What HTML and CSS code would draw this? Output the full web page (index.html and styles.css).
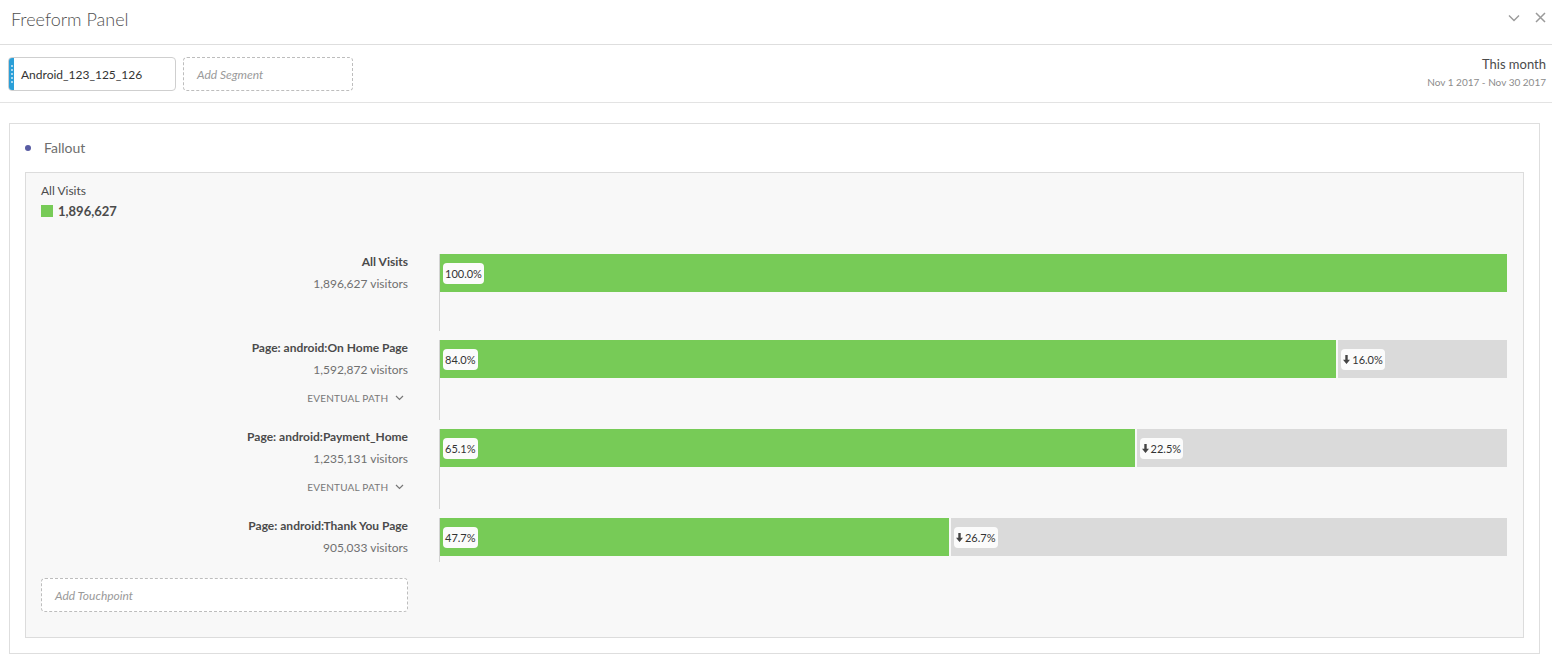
FILE: index.html
```html
<!DOCTYPE html>
<html>
<head>
<meta charset="utf-8">
<link rel="stylesheet" href="styles.css">
</head>
<body>
<header class="panel-header">
  <h1 class="panel-title">Freeform Panel</h1>
  <div class="panel-actions">
    <svg class="icon-chevron" width="12" height="8" viewBox="0 0 12 8"><path d="M1 1.5l5 5 5-5" fill="none" stroke="#9a9a9a" stroke-width="1.4"/></svg>
    <svg class="icon-close" width="11" height="11" viewBox="0 0 11 11"><path d="M1 1l9 9M10 1l-9 9" fill="none" stroke="#9a9a9a" stroke-width="1.5"/></svg>
  </div>
</header>

<section class="segment-bar">
  <div class="segments">
    <div class="segment-pill">
      <span class="segment-handle"><i></i><i></i><i></i><i></i><i></i></span>
      <span class="segment-name">Android_123_125_126</span>
    </div>
    <div class="segment-add">Add Segment</div>
  </div>
  <div class="date-range">
    <div class="date-label">This month</div>
    <div class="date-value">Nov 1 2017 - Nov 30 2017</div>
  </div>
</section>

<section class="viz-card">
  <div class="viz-title"><span class="viz-dot"></span>Fallout</div>
  <div class="fallout">
    <div class="legend">
      <div class="legend-label">All Visits</div>
      <div class="legend-value"><span class="legend-swatch"></span>1,896,627</div>
    </div>

    <div class="rows">
      <div class="row row-first">
        <div class="label">
          <div class="label-title">All Visits</div>
          <div class="label-sub">1,896,627 visitors</div>
        </div>
        <div class="track">
          <div class="bar">
            <div class="bar-fill" style="width:100%"><span class="tag">100.0%</span></div>
          </div>
        </div>
      </div>

      <div class="row">
        <div class="label">
          <div class="label-title">Page: android:On Home Page</div>
          <div class="label-sub">1,592,872 visitors</div>
          <div class="path">EVENTUAL PATH <svg width="9" height="6" viewBox="0 0 9 6"><path d="M1 1l3.5 3.5L8 1" fill="none" stroke="#777" stroke-width="1.2"/></svg></div>
        </div>
        <div class="track">
          <div class="bar">
            <div class="bar-fill" style="width:84%"><span class="tag">84.0%</span></div>
            <div class="bar-drop"><span class="tag"><svg class="arrow" width="7" height="9" viewBox="0 0 7 9"><path d="M2.3 0h2.4v4.8H7L3.5 9 0 4.8h2.3z" fill="#444"/></svg>16.0%</span></div>
          </div>
        </div>
      </div>

      <div class="row">
        <div class="label">
          <div class="label-title">Page: android:Payment_Home</div>
          <div class="label-sub">1,235,131 visitors</div>
          <div class="path">EVENTUAL PATH <svg width="9" height="6" viewBox="0 0 9 6"><path d="M1 1l3.5 3.5L8 1" fill="none" stroke="#777" stroke-width="1.2"/></svg></div>
        </div>
        <div class="track">
          <div class="bar">
            <div class="bar-fill" style="width:65.1%"><span class="tag">65.1%</span></div>
            <div class="bar-drop"><span class="tag"><svg class="arrow" width="7" height="9" viewBox="0 0 7 9"><path d="M2.3 0h2.4v4.8H7L3.5 9 0 4.8h2.3z" fill="#444"/></svg>22.5%</span></div>
          </div>
        </div>
      </div>

      <div class="row row-last">
        <div class="label">
          <div class="label-title">Page: android:Thank You Page</div>
          <div class="label-sub">905,033 visitors</div>
        </div>
        <div class="track">
          <div class="bar">
            <div class="bar-fill" style="width:47.7%"><span class="tag">47.7%</span></div>
            <div class="bar-drop"><span class="tag"><svg class="arrow" width="7" height="9" viewBox="0 0 7 9"><path d="M2.3 0h2.4v4.8H7L3.5 9 0 4.8h2.3z" fill="#444"/></svg>26.7%</span></div>
          </div>
        </div>
      </div>
    </div>

    <div class="touchpoint-add">Add Touchpoint</div>
  </div>
</section>
</body>
</html>
```

FILE: styles.css
```css
* { box-sizing: border-box; }

body {
  margin: 0;
  background: #ffffff;
  font-family: Lato, "Open Sans", "Liberation Sans", sans-serif;
  color: #4b4b4b;
}

.panel-header {
  height: 45px;
  border-bottom: 1px solid #dedede;
  display: flex;
  justify-content: space-between;
  align-items: flex-start;
  padding: 7px 6px 0 11px;
}

.panel-title {
  margin: 0;
  font-size: 18px;
  line-height: 24px;
  font-weight: 300;
  color: #505050;
}

.panel-actions {
  display: flex;
  align-items: center;
  gap: 15px;
  padding-top: 5px;
}

.segment-bar {
  height: 58px;
  border-bottom: 1px solid #e3e3e3;
  display: flex;
  justify-content: space-between;
  padding: 11px 6px 0 8px;
}

.segments {
  display: flex;
  gap: 7px;
  align-items: flex-start;
  padding-top: 1px;
}

.segment-pill {
  width: 168px;
  height: 34px;
  border: 1px solid #cfcfcf;
  border-radius: 4px;
  display: flex;
  align-items: center;
  overflow: hidden;
  background: #fff;
}

.segment-handle {
  width: 5px;
  height: 100%;
  background: #2a9fd8;
  display: flex;
  flex-direction: column;
  align-items: center;
  justify-content: center;
  gap: 2px;
}

.segment-handle i {
  display: block;
  width: 2px;
  height: 2px;
  background: #cfe9f7;
  border-radius: 1px;
}

.segment-name {
  padding-left: 7px;
  font-size: 12px;
  color: #333;
}

.segment-add {
  width: 170px;
  height: 34px;
  border: 1px dashed #bdbdbd;
  border-radius: 4px;
  display: flex;
  align-items: center;
  padding-left: 13px;
  font-size: 12px;
  font-style: italic;
  color: #9a9a9a;
}

.date-range {
  text-align: right;
}

.date-label {
  font-size: 13px;
  line-height: 16px;
  color: #4b4b4b;
}

.date-value {
  margin-top: 3px;
  font-size: 10px;
  line-height: 14px;
  color: #8c8c8c;
}

.viz-card {
  margin: 20px 12px 0 9px;
  height: 531px;
  border: 1px solid #dedede;
  padding: 0 15px 15px 15px;
}

.viz-title {
  display: flex;
  align-items: center;
  padding: 15px 0 15px 0;
  font-size: 14px;
  line-height: 18px;
  color: #6e6e6e;
}

.viz-dot {
  width: 6px;
  height: 6px;
  border-radius: 50%;
  background: #585ca3;
  margin: 0 13px 0 0;
}

.fallout {
  background: #f8f8f8;
  border: 1px solid #dcdcdc;
  height: 466px;
  padding: 10px 16px 0 15px;
}

.legend-label {
  font-size: 12px;
  line-height: 16px;
  color: #4b4b4b;
}

.legend-value {
  display: flex;
  align-items: center;
  margin-top: 3px;
  font-size: 13px;
  font-weight: 700;
  line-height: 18px;
  color: #4b4b4b;
}

.legend-swatch {
  width: 12px;
  height: 12px;
  background: #77cb57;
  margin-right: 5px;
}

.rows {
  margin-top: 34px;
  display: flex;
  flex-direction: column;
  gap: 9px;
}

.row {
  display: grid;
  grid-template-columns: 367px 1fr;
  column-gap: 31px;
}

.label {
  text-align: right;
}

.label-title {
  font-size: 12px;
  line-height: 16px;
  font-weight: 700;
  color: #4b4b4b;
}

.label-sub {
  margin-top: 6px;
  font-size: 12px;
  line-height: 16px;
  color: #707070;
}

.path {
  margin-top: 12px;
  padding-right: 4px;
  font-size: 10px;
  line-height: 16px;
  color: #777;
  letter-spacing: 0.2px;
}

.path svg {
  margin-left: 4px;
  vertical-align: 1px;
}

.track {
  height: 80px;
  border-left: 1px solid #d3d3d3;
}

.row-first .track {
  height: 77px;
}

.row-last .track {
  height: 44px;
}

.bar {
  display: flex;
  height: 38px;
}

.bar-fill {
  background: #77cb57;
  height: 100%;
  padding: 8px 0 0 3px;
}

.bar-drop {
  flex: 1;
  background: #dadada;
  margin-left: 2px;
  height: 100%;
  padding: 8px 0 0 3px;
}

.tag {
  display: inline-flex;
  align-items: center;
  height: 21px;
  padding: 0 2px;
  background: #fbfbfb;
  border-radius: 4px;
  font-size: 11px;
  color: #333;
}

.arrow {
  margin-right: 2px;
}

.touchpoint-add {
  margin-top: 16px;
  width: 367px;
  height: 34px;
  border: 1px dashed #bdbdbd;
  border-radius: 4px;
  background: #fff;
  display: flex;
  align-items: center;
  padding-left: 13px;
  font-size: 12px;
  font-style: italic;
  color: #9a9a9a;
}
```
